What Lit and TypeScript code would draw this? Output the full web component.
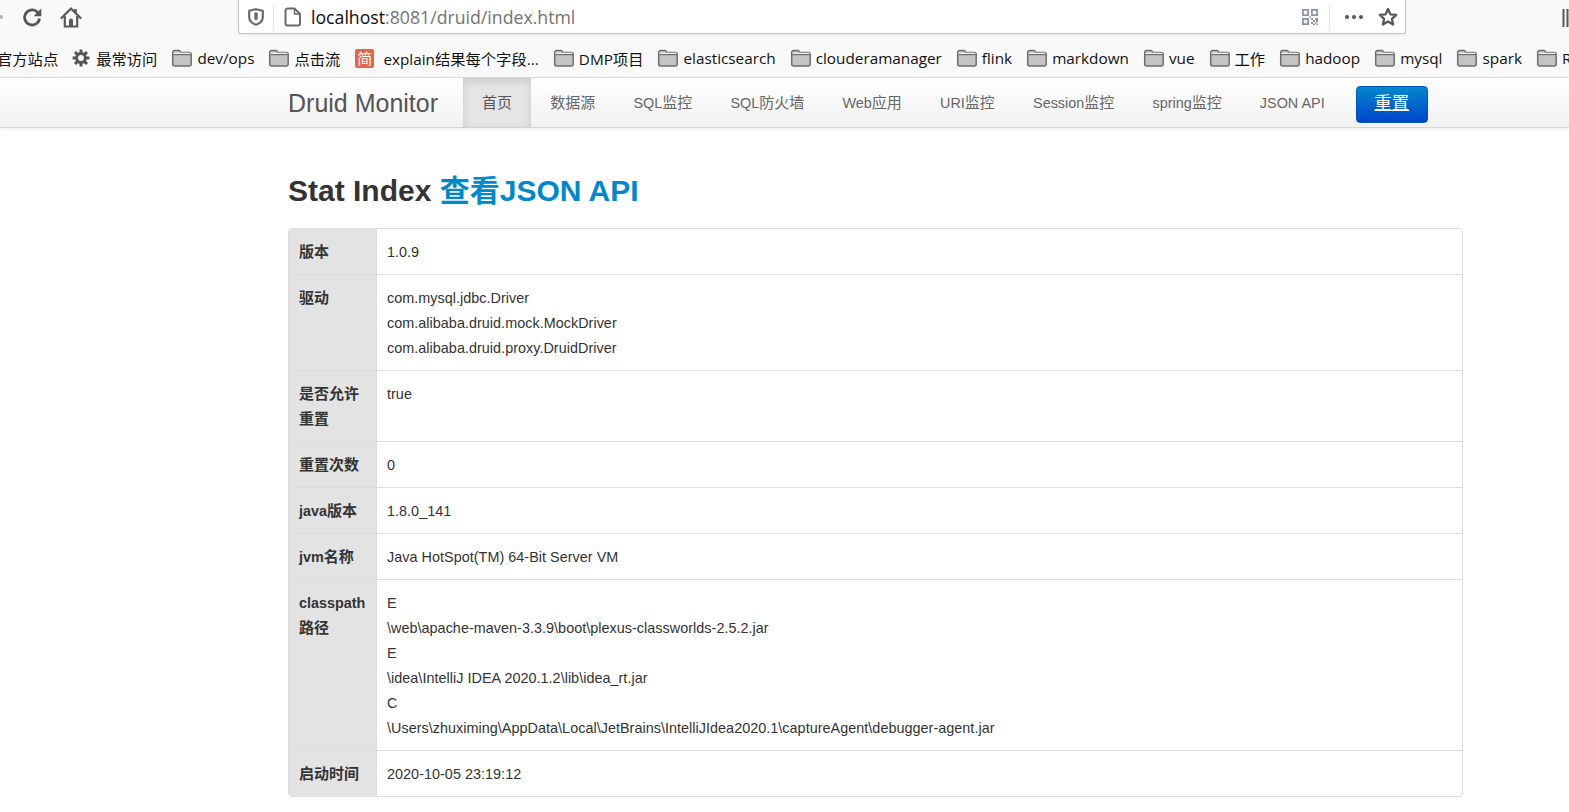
import { LitElement, html, css, svg } from 'lit';
import { customElement } from 'lit/decorators.js';

const folder = svg`<svg class="bm-icon" width="22" height="18" viewBox="0 0 22 18"><path d="M1.700 3.500a2 2 0 0 1 2-2h4.500l2 2h8a2 2 0 0 1 2 2v9.500a2 2 0 0 1-2 2h-14.500a2 2 0 0 1-2-2z" fill="#c4c4c4" stroke="#6e6e6e" stroke-width="1.500"/><path d="M2.200 5.600h17.600" stroke="#6e6e6e" stroke-width="1.200"/><path d="M2.600 4.300h16.800" stroke="#f4f4f4" stroke-width="1.200"/></svg>`;

const gear = svg`<svg class="bm-icon" width="18" height="18" viewBox="0 0 18 18"><circle cx="9" cy="9" r="4.400" fill="none" stroke="#555" stroke-width="3"/><g stroke="#555" stroke-width="3"><path d="M9 .6v3.400M9 14v3.400M.6 9H4M14 9h3.400M3 3l2.400 2.400M12.600 12.600 15 15M15 3l-2.400 2.400M5.400 12.600 3 15"/></g></svg>`;

const bookmarks: { label: string; kind: string }[] = [
  { label: '最常访问', kind: 'gear' },
  { label: 'dev/ops', kind: 'folder' },
  { label: '点击流', kind: 'folder' },
  { label: 'explain结果每个字段...', kind: 'jian' },
  { label: 'DMP项目', kind: 'folder' },
  { label: 'elasticsearch', kind: 'folder' },
  { label: 'clouderamanager', kind: 'folder' },
  { label: 'flink', kind: 'folder' },
  { label: 'markdown', kind: 'folder' },
  { label: 'vue', kind: 'folder' },
  { label: '工作', kind: 'folder' },
  { label: 'hadoop', kind: 'folder' },
  { label: 'mysql', kind: 'folder' },
  { label: 'spark', kind: 'folder' },
  { label: 'R', kind: 'folder' },
];

const navItems = ['首页', '数据源', 'SQL监控', 'SQL防火墙', 'Web应用', 'URI监控', 'Session监控', 'spring监控', 'JSON API'];

const rows: { name: string[]; lines: string[] }[] = [
  { name: ['版本'], lines: ['1.0.9'] },
  { name: ['驱动'], lines: ['com.mysql.jdbc.Driver', 'com.alibaba.druid.mock.MockDriver', 'com.alibaba.druid.proxy.DruidDriver'] },
  { name: ['是否允许', '重置'], lines: ['true'] },
  { name: ['重置次数'], lines: ['0'] },
  { name: ['java版本'], lines: ['1.8.0_141'] },
  { name: ['jvm名称'], lines: ['Java HotSpot(TM) 64-Bit Server VM'] },
  {
    name: ['classpath', '路径'],
    lines: [
      'E',
      '\\web\\apache-maven-3.3.9\\boot\\plexus-classworlds-2.5.2.jar',
      'E',
      '\\idea\\IntelliJ IDEA 2020.1.2\\lib\\idea_rt.jar',
      'C',
      '\\Users\\zhuximing\\AppData\\Local\\JetBrains\\IntelliJIdea2020.1\\captureAgent\\debugger-agent.jar',
    ],
  },
  { name: ['启动时间'], lines: ['2020-10-05 23:19:12'] },
];

const HAN = /([\u3000-\u9fff]+)/;

// han runs come out a little wider than the latin next to them
const mixed = (text: string) =>
  text.split(HAN).map((part, i) => (i % 2 ? html`<span class="cjk">${part}</span>` : part));

@customElement('app-root')
export class AppRoot extends LitElement {
  static styles = css`
    :host {
      display: block;
      height: 812px;
      overflow: hidden;
      background: #fff;
      color: #333;
      font-family: 'Liberation Sans', 'Noto Sans CJK SC', sans-serif;
      font-size: 14.4px;
    }
    .cjk { font-size: 15px; }

    .toolbar {
      height: 40px;
      background: #f9f9fa;
      display: flex;
      align-items: flex-start;
      overflow: hidden;
    }
    .tool-btns {
      width: 238px;
      height: 34px;
      flex: none;
      display: flex;
      align-items: center;
      padding-left: 21px;
      gap: 17px;
      box-sizing: border-box;
    }
    .tip {
      width: 3px;
      height: 4px;
      margin-left: -21px;
      margin-right: 1px;
      background: #b4b4b4;
      border-radius: 0 2px 2px 0;
    }
    .urlbar {
      width: 1168px;
      height: 34px;
      flex: none;
      box-sizing: border-box;
      background: #fff;
      border: 1px solid #c4c4c4;
      border-top: 0;
      border-radius: 0 0 3px 3px;
      box-shadow: 0 1px 2px rgba(0, 0, 0, 0.08);
      display: flex;
      align-items: center;
      padding: 0 7px 0 9px;
    }
    .url {
      margin-left: 9px;
      font-family: 'Open Sans', 'Noto Sans', sans-serif;
      font-size: 17.700px;
      color: #0c0c0d;
      flex: 1;
    }
    .url span { color: #737373; }
    .sep { width: 1px; height: 26px; background: #e4e4e4; margin: 0 10px 0 9px; }
    .sep.right { margin: 0 14px 0 10px; }
    .star { margin-left: 14px; }
    .library { margin-left: 156px; margin-top: 9px; flex: none; }

    .bookmarks {
      height: 38px;
      background: #f9f9fa;
      border-bottom: 1px solid #dcdcde;
      box-sizing: border-box;
      display: flex;
      align-items: center;
      gap: 14px;
      padding-bottom: 1px;
      white-space: nowrap;
      overflow: hidden;
      font-family: 'Open Sans', 'Noto Sans', 'Noto Sans CJK SC', sans-serif;
      font-size: 15.300px;
      color: #111;
    }
    .first { margin-left: -3px; }
    .bm { display: flex; align-items: center; gap: 4px; flex: none; }
    .bm.gear { gap: 6px; }
    .bm-icon { flex: none; display: block; }
    .jian-icon {
      width: 19px;
      height: 19px;
      margin-left: 1px;
      margin-right: 5px;
      border-radius: 2px;
      background: #e9624b;
      color: #fff;
      font-size: 15px;
      line-height: 19px;
      text-align: center;
    }

    .navbar {
      height: 50px;
      box-sizing: border-box;
      background: linear-gradient(#ffffff, #f2f2f2);
      border-bottom: 1px solid #d4d4d4;
      box-shadow: 0 1px 4px rgba(0, 0, 0, 0.065);
      display: flex;
      padding-left: 288px;
    }
    .brand {
      width: 175px;
      flex: none;
      font-size: 25px;
      line-height: 51px;
      color: #555;
    }
    .nav { display: flex; }
    .nav a {
      padding: 0 19.100px;
      line-height: 50px;
      color: #666;
      white-space: nowrap;
    }
    .nav a.active {
      color: #555;
      background: #e5e5e5;
      box-shadow: inset 0 3px 8px rgba(0, 0, 0, 0.125);
    }
    .reset {
      margin: 8px 0 0 12px;
      width: 72px;
      height: 37px;
      box-sizing: border-box;
      border-radius: 4px;
      border: 1px solid #0055bb;
      background: linear-gradient(#0088cc, #0044cc);
      color: #fff;
      font-size: 17.500px;
      line-height: 33px;
      text-align: center;
      text-decoration: underline;
    }

    .content { width: 1175px; margin-left: 288px; }
    h3 {
      margin: 43px 0 17px;
      font-size: 30px;
      line-height: 40px;
      font-weight: bold;
      color: #333;
    }
    h3 a { color: #0088cc; text-decoration: none; }

    table {
      width: 100%;
      border-collapse: separate;
      border-spacing: 0;
      border: 1px solid #ddd;
      border-radius: 4px;
      line-height: 25px;
      overflow: hidden;
    }
    th, td {
      padding: 10px;
      vertical-align: top;
      text-align: left;
      border-top: 1px solid #ddd;
    }
    tr:first-child th, tr:first-child td { border-top: 0; }
    th {
      width: 67px;
      background: #e3e3e3;
      border-right: 1px solid #ddd;
      white-space: nowrap;
    }
    th div, td div { height: 25px; white-space: nowrap; }
    td div, th div.plain { line-height: 27px; }
    td { letter-spacing: 0.03px; }
  `;

  private bookmarkIcon(kind: string) {
    if (kind === 'gear') return gear;
    if (kind === 'jian') return html`<div class="jian-icon">简</div>`;
    return folder;
  }

  render() {
    return html`
      <div class="toolbar">
        <div class="tool-btns">
          <div class="tip"></div>
          <svg width="22" height="22" viewBox="0 0 22 22" fill="none" stroke="#58585c" stroke-width="2.800">
            <path d="M18.500 12.500a7.500 7.500 0 1 1-2.600-6.800L18.500 8"/>
            <path d="M20.300 2.500v7.800h-7.800" fill="#58585c" stroke="none"/>
          </svg>
          <svg width="22" height="22" viewBox="0 0 22 22" fill="none" stroke="#58585c" stroke-width="2.200">
            <path d="M1.500 12 11 2.500l9.500 9.500" stroke-linecap="round"/>
            <path d="M4.800 10v10.500h12.400V10"/>
            <path d="M9 20.500v-6a2 2 0 0 1 4 0v6z" fill="#58585c" stroke="none"/>
            <path d="M15.500 3v4" stroke-width="2.600"/>
          </svg>
        </div>
        <div class="urlbar">
          <svg width="16" height="18" viewBox="0 0 16 18">
            <path d="M8 1.200 14.800 2.800v6.200c0 4-3 6.500-6.800 7.800C4.200 15.500 1.200 13 1.200 9V2.800z" fill="none" stroke="#6b6b6f" stroke-width="2.200"/>
            <path d="M6.300 4.500h3.400v6.500L8 12.500 6.300 11z" fill="#6b6b6f"/>
          </svg>
          <div class="sep"></div>
          <svg width="18" height="20" viewBox="0 0 18 20" fill="none" stroke="#6b6b6f" stroke-width="2">
            <path d="M3.500 1.500h7l5.500 5.500v9.500a2 2 0 0 1-2 2H3.500a2 2 0 0 1-2-2v-13a2 2 0 0 1 2-2z"/>
            <path d="M10.500 1.500v5.500h5.500" stroke-width="1.500"/>
          </svg>
          <div class="url">localhost<span>:8081/druid/index.html</span></div>
          <svg width="18" height="18" viewBox="0 0 18 18" fill="#8d97a3">
            <path d="M1 1h7v7H1zM2.800 2.800v3.400h3.400V2.800zM10 1h7v7h-7zM11.800 2.800v3.400h3.400V2.800zM1 10h7v7H1zM2.800 11.800v3.400h3.400v-3.400z" fill-rule="evenodd"/>
            <path d="M10 10h2v2h-2zM14 10h3v2h-3zM12 12h2v2h-2zM15 12h2v2h-2zM10 14h2v2h-2zM14 14h1.500v1.500H14zM12 15.500h2V17h-2zM15.500 15.500H17V17h-1.500zM8.300 8.300h1.400v1.400H8.300z"/>
          </svg>
          <div class="sep right"></div>
          <svg width="20" height="6" viewBox="0 0 20 6" fill="#58585c">
            <circle cx="3" cy="3" r="2"/><circle cx="10" cy="3" r="2"/><circle cx="17" cy="3" r="2"/>
          </svg>
          <svg class="star" width="20" height="20" viewBox="0 0 20 20" fill="none" stroke="#58585c" stroke-width="2.300">
            <path d="M10 2l2.400 5.300 5.800.6-4.300 3.900 1.200 5.700L10 14.600 4.900 17.500l1.200-5.700L1.800 7.900l5.800-.6z" stroke-linejoin="round"/>
          </svg>
        </div>
        <svg class="library" width="8" height="18" viewBox="0 0 8 18" fill="none" stroke="#58585c" stroke-width="2">
          <path d="M1.500 0v18M5.500 0v18"/>
        </svg>
      </div>
      <div class="bookmarks">
        <div class="bm first">官方站点</div>
        ${bookmarks.map(
          (b) => html`<div class="bm ${b.kind}">${this.bookmarkIcon(b.kind)}<span>${b.label}</span></div>`,
        )}
      </div>
      <div class="navbar">
        <div class="brand">Druid Monitor</div>
        <div class="nav">
          ${navItems.map((n, i) => html`<a class=${i === 0 ? 'active' : ''}>${mixed(n)}</a>`)}
        </div>
        <div class="reset">重置</div>
      </div>
      <div class="content">
        <h3>Stat Index <a>查看JSON API</a></h3>
        <table>
          ${rows.map(
            (r) => html`<tr>
              <th>${r.name.map((n) => html`<div class=${HAN.test(n) ? '' : 'plain'}>${mixed(n)}</div>`)}</th>
              <td>${r.lines.map((l) => html`<div>${l}</div>`)}</td>
            </tr>`,
          )}
        </table>
      </div>
    `;
  }
}
